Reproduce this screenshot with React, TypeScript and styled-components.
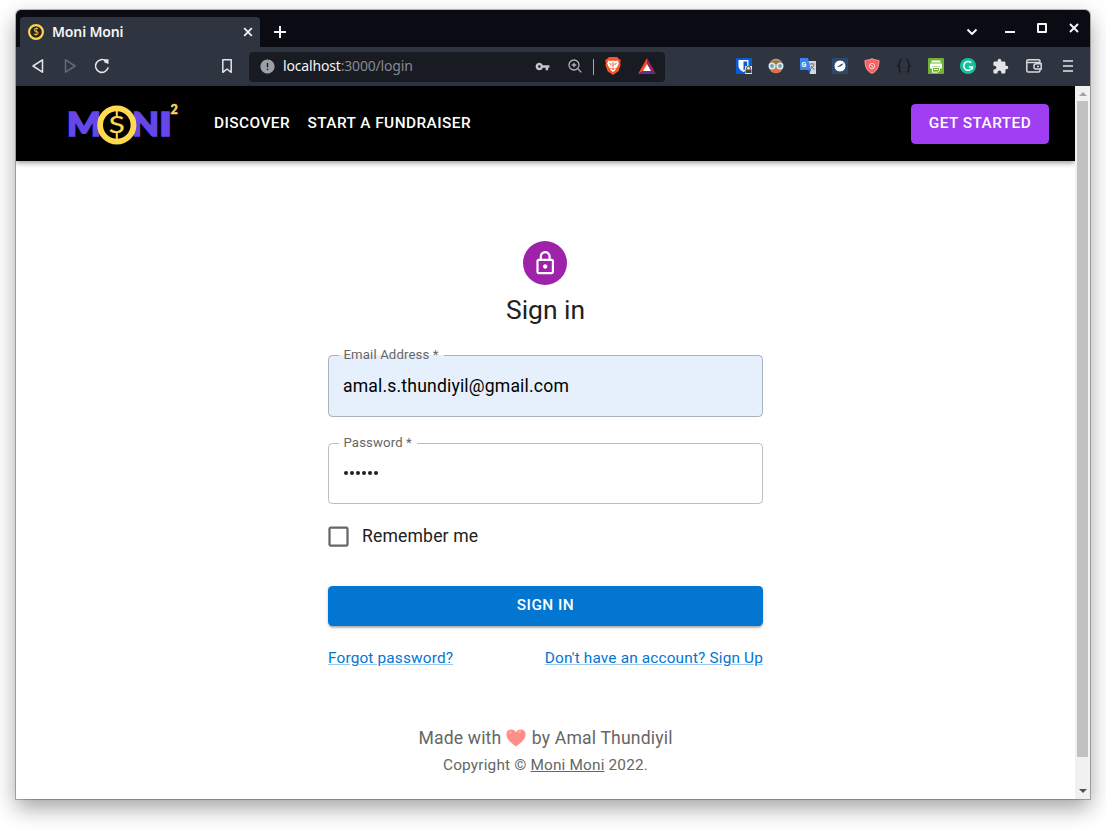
import React from "react";
import styled, { createGlobalStyle } from "styled-components";
import {
  MdCheckBoxOutlineBlank,
  MdError,
  MdExtension,
  MdOutlineLock,
  MdVpnKey,
} from "react-icons/md";

const GlobalStyle = createGlobalStyle`
  * { box-sizing: border-box; }
  body { margin: 0; background: #fff; overflow: hidden; }
  svg { display: block; flex: none; }
`;

const Desktop = styled.div`
  height: 831px;
  padding: 10px 16px 32px;
  font-family: Roboto, sans-serif;
`;

const Window = styled.div`
  display: flex;
  flex-direction: column;
  height: 789px;
  width: 1074px;
  overflow: hidden;
  border-radius: 5px 5px 0 0;
  background: #fff;
`;

const Shadow = styled.div`
  width: 1074px;
  border-radius: 5px 5px 0 0;
  box-shadow: 0 0 0 1px rgba(0, 0, 0, 0.26), 0 9px 22px 0 rgba(0, 0, 0, 0.37);
`;

const TabBar = styled.div`
  display: flex;
  height: 37px;
  background: #0b0b14;
  color: #f4f5f7;
  padding: 7px 0 0 4px;
`;

const Tab = styled.div`
  display: flex;
  align-items: center;
  width: 240px;
  height: 30px;
  padding: 0 7px 0 8px;
  border-radius: 4px 4px 0 0;
  background: #2f3441;
`;

const TabTitle = styled.span`
  flex: 1;
  margin-left: 8px;
  font: 600 14px/20px "Noto Sans", sans-serif;
  letter-spacing: -0.15px;
`;

const NewTab = styled.div`
  padding: 9px 0 0 14px;
`;

const WindowControls = styled.div`
  display: flex;
  gap: 20px;
  margin-left: auto;
  padding: 5px 10px 0 0;
`;

const Toolbar = styled.div`
  display: flex;
  align-items: center;
  height: 39px;
  background: #2f3441;
  padding-left: 6px;
`;

const ToolButton = styled.div<{ $w?: number }>`
  display: flex;
  flex: none;
  align-items: center;
  justify-content: center;
  width: ${(p) => p.$w ?? 32}px;
  height: 32px;
  margin-top: -1px;
  color: #e4e5e8;
`;

const BookmarkSlot = styled.div`
  margin-left: 93px;
  margin-right: 6px;
`;

const AddressBar = styled.div`
  display: flex;
  align-items: center;
  width: 416px;
  height: 30px;
  padding-left: 10px;
  border-radius: 4px;
  background: #181b22;
`;

const Url = styled.span`
  flex: none;
  width: 243px;
  margin: -2px 0 0 7px;
  font: 400 14px/20px "Noto Sans", sans-serif;
  letter-spacing: -0.17px;
  color: #858990;
  b {
    font-weight: 400;
    color: #f2f3f5;
  }
`;

const Divider = styled.span`
  flex: none;
  width: 1px;
  height: 16px;
  margin: 0 7px 0 2px;
  background: #a4a7ad;
`;

const Extensions = styled.div`
  display: flex;
  margin-left: auto;
  padding-right: 5px;
`;

const Viewport = styled.div`
  display: flex;
  flex: 1;
`;

const Page = styled.div`
  flex: 1;
`;

const Scrollbar = styled.div`
  display: flex;
  flex-direction: column;
  align-items: center;
  width: 15px;
  background: #f1f1f1;
`;

const ScrollArrow = styled.div<{ $down?: boolean }>`
  width: 0;
  height: 0;
  margin: ${(p) => (p.$down ? "auto 0 6px" : "6px 0 5px")};
  border: 4px solid transparent;
  border-${(p) => (p.$down ? "top" : "bottom")}-color: ${(p) => (p.$down ? "#505050" : "#a3a3a3")};
  border-${(p) => (p.$down ? "bottom" : "top")}-width: 0;
`;

const ScrollThumb = styled.div`
  width: 11px;
  height: 656px;
  background: #c1c1c1;
`;

const Header = styled.header`
  display: flex;
  align-items: center;
  height: 75px;
  padding: 0 26px 0 50px;
  background: #000;
  color: #fff;
  box-shadow: 0 2px 5px rgba(0, 0, 0, 0.4);
`;

const NavLink = styled.a`
  margin-right: 17.4px;
  font-size: 15.4px;
  font-weight: 500;
  line-height: 27px;
  letter-spacing: 0.44px;
`;

const Nav = styled.nav`
  display: flex;
  flex: 1;
  margin: 0 0 0 32px;
`;

const Button = styled.button<{ $accent?: boolean }>`
  display: flex;
  align-items: center;
  justify-content: center;
  width: ${(p) => (p.$accent ? "138px" : "100%")};
  height: 40px;
  padding: ${(p) => (p.$accent ? "0" : "0 0 2px")};
  border: 0;
  border-radius: 4.4px;
  font: 500 15.4px/27px Roboto, sans-serif;
  letter-spacing: 0.44px;
  color: #fff;
  background: ${(p) => (p.$accent ? "#a03ef2" : "#0276d1")};
  box-shadow: ${(p) =>
    p.$accent ? "none" : "0 3px 2px -2px rgba(0,0,0,.2), 0 2px 2px rgba(0,0,0,.14), 0 1px 5px rgba(0,0,0,.12)"};
`;

const Main = styled.main`
  display: flex;
  flex-direction: column;
  align-items: center;
  width: 435px;
  margin: 80px auto 0;
`;

const Avatar = styled.div`
  display: flex;
  align-items: center;
  justify-content: center;
  width: 44px;
  height: 44px;
  margin-right: 1px;
  padding-left: 1px;
  border-radius: 50%;
  background: #9f22ab;
  color: #fff;
`;

const Title = styled.h1`
  margin: 7px 0 27px;
  font-size: 26.4px;
  font-weight: 400;
  line-height: 36px;
  color: #212121;
`;

const Field = styled.label<{ $filled?: boolean; $h: number }>`
  position: relative;
  display: flex;
  align-items: center;
  width: 100%;
  height: ${(p) => p.$h}px;
  margin-bottom: 26px;
  padding-left: 15px;
  border-radius: 4.4px;
  font-size: 17.6px;
  line-height: 25px;
  letter-spacing: 0.165px;
  color: ${(p) => (p.$filled ? "#000" : "#212121")};
  background: ${(p) => (p.$filled ? "#e6f0fd" : "#fff")};
`;

const Outline = styled.fieldset`
  position: absolute;
  inset: -8px 0 0;
  min-width: 0;
  margin: 0;
  padding: 0 9.5px;
  border: 1px solid rgba(0, 0, 0, 0.26);
  border-radius: 4.4px;
`;

const Legend = styled.legend`
  height: 16px;
  padding: 0 5px;
  font-size: 13.2px;
  line-height: 15px;
  letter-spacing: 0.12px;
  white-space: nowrap;
  color: #666;
`;

const Dots = styled.span`
  display: flex;
  gap: 2px;
  margin: -1px 0 0 1px;
  i {
    width: 4px;
    height: 4px;
    border-radius: 50%;
    background: #212121;
  }
`;

const Remember = styled.label`
  display: flex;
  align-items: center;
  align-self: flex-start;
  gap: 10px;
  height: 27px;
  margin: -7px 0 36px -3px;
  font-size: 17.6px;
  letter-spacing: 0.15px;
  color: #212121;
  svg { color: #666; }
  span { margin-top: -1px; }
`;

const Links = styled.div`
  display: flex;
  justify-content: space-between;
  width: 100%;
  margin-top: 21px;
`;

const TextLink = styled.a<{ $muted?: boolean }>`
  font-size: 15.4px;
  line-height: 22px;
  letter-spacing: 0.15px;
  color: ${(p) => (p.$muted ? "inherit" : "#0276d1")};
  text-decoration: underline;
  text-decoration-color: ${(p) => (p.$muted ? "#666" : "rgba(2,118,209,.4)")};
`;

const Footer = styled.footer`
  display: flex;
  flex-direction: column;
  align-items: center;
  margin-top: 55px;
  color: #666;
`;

const MadeBy = styled.div`
  display: flex;
  align-items: center;
  height: 27px;
  font-size: 17.6px;
  letter-spacing: 0.165px;
  svg { margin: 0 5.5px 0 5px; }
`;

const Copyright = styled.div`
  font-size: 15.4px;
  line-height: 24px;
  letter-spacing: 0.165px;
  margin-top: 2px;
`;

const CoinIcon = () => (
  <svg width="16" height="16" viewBox="0 0 16 16">
    <circle cx="8" cy="8" r="6.900" fill="#26231d" stroke="#fcd651" strokeWidth="2.200" />
    <text x="8" y="11.400" textAnchor="middle" fontFamily="Lato" fontSize="9.500" fill="#fcd651">$</text>
  </svg>
);

const Logo = () => (
  <svg width="116" height="46" viewBox="0 0 116 46">
    <g fill="#6546e8" stroke="#6546e8" strokeWidth="1.600" fontFamily="Lato" fontWeight="900" fontSize="32">
      <text x="1" y="35.300" textLength="34" lengthAdjust="spacingAndGlyphs">M</text>
      <text x="66" y="35.300" textLength="27" lengthAdjust="spacingAndGlyphs">N</text>
      <text x="93" y="35.300" textLength="13" lengthAdjust="spacingAndGlyphs">I</text>
    </g>
    <circle cx="50.800" cy="24" r="16.700" fill="#000" stroke="#ffda50" strokeWidth="5.800" />
    <text x="42.800" y="32.200" textLength="16" lengthAdjust="spacingAndGlyphs" fontFamily="Lato" fontSize="23.500" fill="#ffda50" stroke="#ffda50" strokeWidth=".2">S</text>
    <path d="M50.800 10v7M50.800 31.500v7" stroke="#ffda50" strokeWidth="2" />
    <text x="104.500" y="12.600" fontFamily="Lato" fontWeight="900" fontSize="12.500" fill="#ffcf5c" stroke="#ffcf5c" strokeWidth=".5">2</text>
  </svg>
);

const Stroke = ({ d, size = 16, w = 1.5, color = "currentColor" }: { d: string; size?: number; w?: number; color?: string }) => (
  <svg width={size} height={size} viewBox={`0 0 ${size} ${size}`} fill="none" stroke={color} strokeWidth={w} strokeLinejoin="round">
    <path d={d} />
  </svg>
);

const Reload = () => (
  <svg width="16" height="16" viewBox="0 0 16 16" fill="none" stroke="currentColor" strokeWidth="1.6">
    <path d="M14.200 9.400A6.400 6.400 0 1 1 12 3" />
    <path d="M9.800 1.200h4.700v4.700l-4-1.500z" fill="currentColor" stroke="none" />
  </svg>
);

const BraveIcon = () => (
  <svg width="16" height="18" viewBox="0 0 16 18">
    <path d="M4 0h8l2 2 1.800 1-.6 3 .4 2-2.200 6.200L8 18l-5.400-3.800L.4 8l.4-2L.2 3 2 2z" fill="#fb542b" />
    <path d="M3.200 3.400 6 4l2-.6L10 4l2.800-.6 1 3-1.800 4-2 .8 1 1.400L8 15l-3-2.400 1-1.400-2-.8-1.800-4z" fill="#fff" />
    <path d="m3.800 6 2.800.8-.6 1.400zM12.200 6l-2.800.8.6 1.400zM7.600 5h.8l.3 4L8 10.200 7.300 9zM6.200 11.800 8 11l1.800.8L8 13z" fill="#fb542b" />
  </svg>
);

const BatIcon = () => (
  <svg width="18" height="16" viewBox="0 0 18 16">
    <path d="M9 0 0 16l9-5z" fill="#ff4724" />
    <path d="M9 0v11l9 5z" fill="#9e1f63" />
    <path d="M0 16h18l-9-5z" fill="#662d91" />
    <path d="m9 6-4 7h8z" fill="#fff" />
  </svg>
);

const BitwardenIcon = () => (
  <svg width="16" height="16" viewBox="0 0 16 16">
    <rect width="16" height="16" rx="1" fill="#0b5bd8" />
    <path d="M2.500 2h10v6c0 3-3 5-5 6-2-1-5-3-5-6z" fill="#fff" />
    <path d="M7.500 3.500h3.700V8c0 2-2 3.500-3.700 4.400z" fill="#0b5bd8" />
    <path d="M9 8h7v8H9z" fill="#e3e5df" />
    <path d="M10.700 11.500V10a1.800 1.800 0 0 1 3.600 0v1.500" fill="none" stroke="#44463f" />
    <path d="M9.500 11.500h6V15h-6z" fill="#44463f" />
  </svg>
);

const FaceIcon = () => (
  <svg width="16" height="16" viewBox="0 0 16 16">
    <ellipse cx="8" cy="8" rx="7" ry="7.300" fill="#c49a72" />
    <path d="M2 10h12c-.5 3-3 5-6 5s-5.500-2-6-5z" fill="#e26e50" />
    <path d="M1.500 6C2.500 3 5 2.500 8 2.500S13.500 3 14.500 6z" fill="#997350" />
    <circle cx="4" cy="8" r="2.700" fill="#6fa6b3" stroke="#dcebea" strokeWidth="1.600" />
    <circle cx="12" cy="8" r="2.700" fill="#6fa6b3" stroke="#dcebea" strokeWidth="1.600" />
  </svg>
);

const TranslateIcon = () => (
  <svg width="16" height="16" viewBox="0 0 16 16">
    <path d="M5 3h11v13h-6z" fill="#d3d7dc" />
    <path d="M0 0h8l3 12H1a1 1 0 0 1-1-1z" fill="#3e83ee" />
    <path d="m8 12 3 0-2 4z" fill="#2458c0" />
    <path d="M9.500 6h5M12 5v1M14 6.500c-.5 2-2 3.500-3.500 4.500M11 8l3.500 4" stroke="#69727b" fill="none" />
    <text x="1.500" y="8.500" fontFamily="Roboto" fontWeight="700" fontSize="7" fill="#fff">G</text>
  </svg>
);

const WaveIcon = () => (
  <svg width="16" height="16" viewBox="0 0 16 16">
    <rect width="16" height="16" rx="1" fill="#2d4a70" />
    <circle cx="8" cy="8" r="6" fill="#fff" stroke="#1a2d49" strokeWidth=".8" />
    <path d="M3.500 8.500c3 1.500 4.500-3.500 9-3-2.500.5-3.500 5-9 3z" fill="#28466a" />
  </svg>
);

const ShieldIcon = () => (
  <svg width="16" height="16" viewBox="0 0 16 16">
    <path d="M8 .6c2.200 1.300 4.500 1.700 7 1.800 0 6-1.500 10.500-7 13C2.500 12.900 1 8.400 1 2.400 3.500 2.300 5.800 1.900 8 .6z" fill="#fa6268" stroke="#ff9794" />
    <circle cx="8" cy="8" r="2.700" fill="none" stroke="#ffd0ce" />
    <path d="m6.200 6.200 3.600 3.600" stroke="#ffd0ce" />
  </svg>
);

const PrinterIcon = () => (
  <svg width="16" height="16" viewBox="0 0 16 16">
    <rect width="16" height="16" rx="1" fill="#72b236" />
    <path d="M3.500 2.500h9v2h-9zM2 5.500h12v5h-2v-2H4v2H2z" fill="#fff" />
    <path d="M4.500 9.500h7v3l-2 1.700H4.500z" fill="none" stroke="#fff" />
    <path d="M6 11.500h4" stroke="#fff" />
  </svg>
);

const GrammarIcon = () => (
  <svg width="16" height="16" viewBox="0 0 16 16">
    <circle cx="8" cy="8" r="8" fill="#12c39a" />
    <path d="M11.200 4.800A4.400 4.400 0 1 0 12.400 9H8.800M12.400 8.700v2.600" fill="none" stroke="#fff" strokeWidth="1.500" />
  </svg>
);

const WalletIcon = () => (
  <svg width="16" height="14" viewBox="0 0 16 14" fill="none" stroke="#d9dadd" strokeWidth="1.500">
    <path d="M14 4V2.200C14 1.300 13.300.8 12.500.8H2.300C1.300.8.8 1.300.8 2.200v9.200c0 1 .6 1.600 1.500 1.600h10.200c.9 0 1.500-.6 1.500-1.500v-1.400M1 3.500h13" />
    <path d="M15.200 4.800h-4.700a2.600 2.600 0 0 0 0 5.200h4.700zM11 7.400h2" />
  </svg>
);

const ZoomIcon = () => (
  <svg width="14" height="14" viewBox="0 0 14 14" fill="none" stroke="#b0b3b8" strokeWidth="1.300">
    <circle cx="6" cy="6" r="5" />
    <path d="m9.700 9.700 3.700 3.700M6 3.700v4.600M3.700 6h4.600" />
  </svg>
);

const Heart = () => (
  <svg width="20" height="18" viewBox="0 0 20 18">
    <path d="M10 17.500C6 14.500.4 10.600.4 5.300.4 2.300 2.500.4 5.200.4 7.300.4 9.200 1.500 10 3.600 10.800 1.500 12.700.4 14.800.4c2.700 0 4.800 1.900 4.800 4.900 0 5.300-5.600 9.200-9.600 12.200z" fill="#ff8d88" />
    <ellipse cx="4.200" cy="3.400" rx="1.700" ry="1" transform="rotate(-35 4.200 3.400)" fill="#ffb0aa" />
    <ellipse cx="13.600" cy="3" rx="1.600" ry="1" transform="rotate(-30 13.600 3)" fill="#ffb0aa" />
  </svg>
);

const extensions = [
  BitwardenIcon,
  FaceIcon,
  TranslateIcon,
  WaveIcon,
  ShieldIcon,
  () => <Stroke w={1.5} color="#191b20" d="M5.500 2H5C3.500 2 3.500 3 3.500 5S3 8 1.500 8C3 8 3.500 9 3.500 11s0 3 1.500 3h.5M10.500 2h.5c1.500 0 1.500 1 1.500 3s.5 3 2 3c-1.500 0-2 1-2 3s0 3-1.500 3h-.5" />,
  PrinterIcon,
  GrammarIcon,
  () => <MdExtension size={17} />,
];

export default function App() {
  return (
    <Desktop>
      <GlobalStyle />
      <Shadow>
        <Window>
          <TabBar>
            <Tab>
              <CoinIcon />
              <TabTitle>Moni Moni</TabTitle>
              <Stroke size={10} w={1.8} d="M1.200 1.200l7.600 7.600M8.800 1.200 1.200 8.800" />
            </Tab>
            <NewTab>
              <Stroke size={12} w={2} d="M6 0v12M0 6h12" />
            </NewTab>
            <WindowControls>
              <Stroke size={18} w={2} d="M1.500 7.500 6 12l4.500-4.500" />
              <Stroke size={12} w={2} d="M1 10H11" />
              <Stroke size={12} w={2} d="M2 2h8v8H2z" />
              <Stroke size={12} w={2} d="m2 2 8 8M10 2l-8 8" />
            </WindowControls>
          </TabBar>
          <Toolbar>
            <ToolButton><Stroke d="M3 8 12.500 1.800v12.400z" /></ToolButton>
            <ToolButton><Stroke color="#676b75" d="M13 8 3.500 1.800v12.400z" /></ToolButton>
            <ToolButton><Reload /></ToolButton>
            <BookmarkSlot>
              <ToolButton><Stroke d="M3.800 1.800h8.400v12.500L8 11l-4.200 3.300z" /></ToolButton>
            </BookmarkSlot>
            <AddressBar>
              <MdError size={17} color="#9ba0a8" />
              <Url><b>localhost</b>:3000/login</Url>
              <ToolButton $w={32}><MdVpnKey size={15} color="#c4c6ca" /></ToolButton>
              <ToolButton $w={33}><ZoomIcon /></ToolButton>
              <Divider />
              <ToolButton $w={24}><BraveIcon /></ToolButton>
              <ToolButton $w={44}><BatIcon /></ToolButton>
            </AddressBar>
            <Extensions>
              {extensions.map((Icon, i) => (
                <ToolButton key={i}><Icon /></ToolButton>
              ))}
              <ToolButton $w={35}><WalletIcon /></ToolButton>
              <ToolButton $w={34}><Stroke size={12} w={2} color="#b7bac0" d="M1 1h10M1 6h10M1 11h10" /></ToolButton>
            </Extensions>
          </Toolbar>
          <Viewport>
            <Page>
              <Header>
                <Logo />
                <Nav>
                  <NavLink>DISCOVER</NavLink>
                  <NavLink>START A FUNDRAISER</NavLink>
                </Nav>
                <Button $accent>GET STARTED</Button>
              </Header>
              <Main>
                <Avatar><MdOutlineLock size={26.4} /></Avatar>
                <Title>Sign in</Title>
                <Field $filled $h={62}>
                  <Outline><Legend>Email Address *</Legend></Outline>
                  amal.s.thundiyil@gmail.com
                </Field>
                <Field $h={61}>
                  <Outline><Legend>Password *</Legend></Outline>
                  <Dots><i /><i /><i /><i /><i /><i /></Dots>
                </Field>
                <Remember>
                  <MdCheckBoxOutlineBlank size={27} />
                  <span>Remember me</span>
                </Remember>
                <Button>SIGN IN</Button>
                <Links>
                  <TextLink>Forgot password?</TextLink>
                  <TextLink>Don't have an account? Sign Up</TextLink>
                </Links>
              </Main>
              <Footer>
                <MadeBy>Made with <Heart /> by Amal Thundiyil</MadeBy>
                <Copyright>Copyright © <TextLink $muted>Moni Moni</TextLink> 2022.</Copyright>
              </Footer>
            </Page>
            <Scrollbar>
              <ScrollArrow />
              <ScrollThumb />
              <ScrollArrow $down />
            </Scrollbar>
          </Viewport>
        </Window>
      </Shadow>
    </Desktop>
  );
}
